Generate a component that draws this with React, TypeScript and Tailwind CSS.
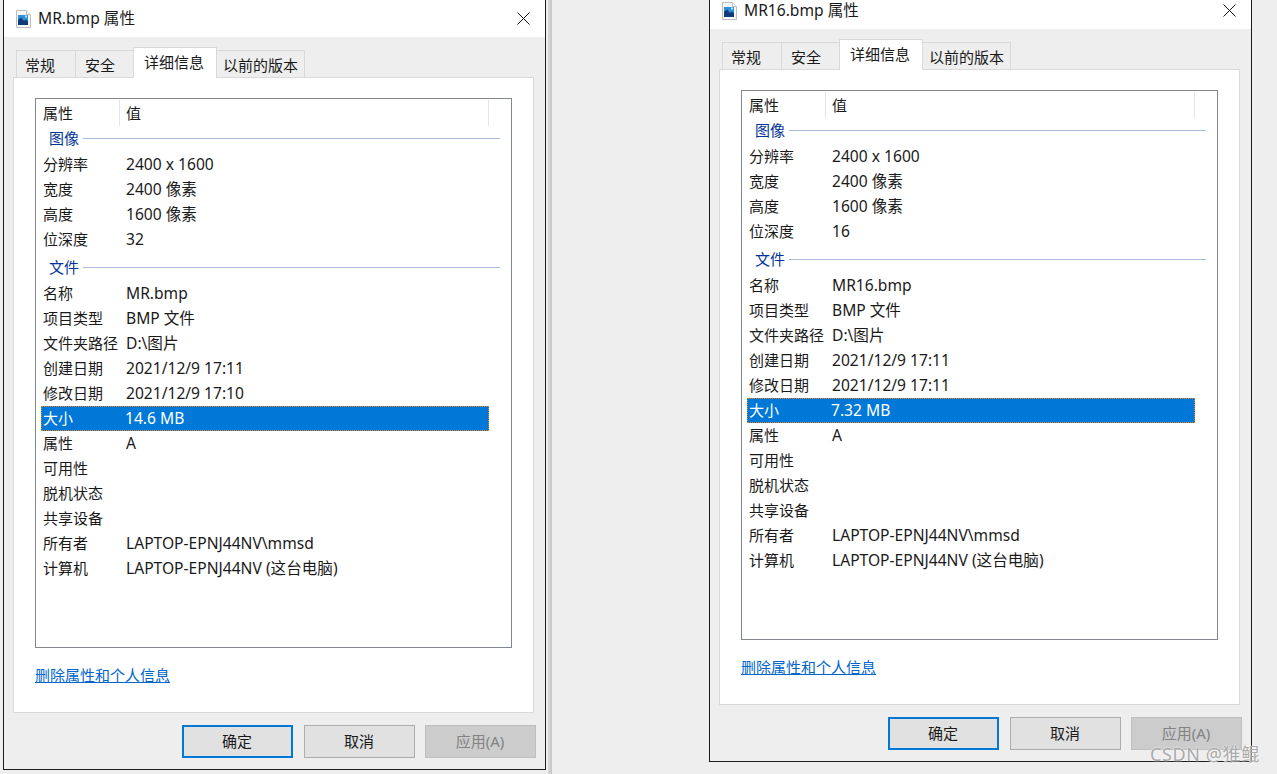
import React from 'react';

type Row = { label: string; value?: string; selected?: boolean };

const FileIcon = () => (
  <svg width="15" height="18" viewBox="0 0 15 18" className="mr-[7px] shrink-0">
    <path d="M0.5 0.5H10.5L14.5 4.5V17.5H0.5Z" fill="#f7f7f7" stroke="#b9bec4" />
    <path d="M10.5 0.5V4.5H14.5" fill="#ffffff" stroke="#b9bec4" />
    <rect x="2" y="5" width="10" height="10" fill="#2f8fd8" />
    <path d="M2 15V10L5 7.5L8 11L10 9.5L12 11.5V15Z" fill="#123a7a" />
    <rect x="9" y="5.5" width="2" height="2" fill="#bfe6fb" />
  </svg>
);

const Tab = ({ label, className, active }: { label: string; className: string; active?: boolean }) => (
  <div
    className={
      'flex items-center border border-b-0 border-[#d9d9d9] ' +
      (active
        ? 'relative z-10 -mb-px h-[31px] bg-white pb-[2px] '
        : 'mt-[3px] h-[27px] bg-[#eeeeee] pt-[3px] ') +
      className
    }
  >
    {label}
  </div>
);

const Group = ({ label, className }: { label: string; className: string }) => (
  <div className={`flex items-center pl-[13px] pr-[11px] ${className}`}>
    <span className="text-[#003399]">{label}</span>
    <div className="ml-[4px] h-px flex-1 bg-[#a9bbdc]" />
  </div>
);

const PropRow = ({ label, value, selected }: Row) => (
  <div
    className={
      'ml-[5px] flex h-[25px] w-[448px] items-center pl-[2px] ' +
      (selected ? 'border border-dotted border-[#e8801a] bg-[#0078d7] text-white' : '')
    }
  >
    <span className={selected ? 'w-[82px] -ml-px' : 'w-[83px]'}>{label}</span>
    <span className="text-[15.6px]">{value}</span>
  </div>
);

const Button = ({ label, variant }: { label: string; variant?: 'primary' | 'disabled' }) => (
  <button
    className={
      'h-[33px] w-[111px] pr-px ' +
      (variant === 'primary'
        ? 'mr-px border-2 border-[#0078d7] bg-[#e1e1e1]'
        : variant === 'disabled'
          ? 'border border-[#bfbfbf] bg-[#cccccc] text-[#838383]'
          : 'border border-[#adadad] bg-[#e1e1e1]')
    }
  >
    {label}
  </button>
);

const PropertiesWindow = ({
  title,
  depth,
  fileName,
  modified,
  size,
  className,
}: {
  title: string;
  depth: string;
  fileName: string;
  modified: string;
  size: string;
  className: string;
}) => {
  const imageRows: Row[] = [
    { label: '分辨率', value: '2400 x 1600' },
    { label: '宽度', value: '2400 像素' },
    { label: '高度', value: '1600 像素' },
    { label: '位深度', value: depth },
  ];
  const fileRows: Row[] = [
    { label: '名称', value: fileName },
    { label: '项目类型', value: 'BMP 文件' },
    { label: '文件夹路径', value: 'D:\\图片' },
    { label: '创建日期', value: '2021/12/9 17:11' },
    { label: '修改日期', value: modified },
    { label: '大小', value: size, selected: true },
    { label: '属性', value: 'A' },
    { label: '可用性' },
    { label: '脱机状态' },
    { label: '共享设备' },
    { label: '所有者', value: 'LAPTOP-EPNJ44NV\\mmsd' },
    { label: '计算机', value: 'LAPTOP-EPNJ44NV (这台电脑)' },
  ];

  return (
    <div className={`h-[770px] w-[543px] shrink-0 border-x border-b border-[#1c1c1c] bg-[#eeeeee] ${className}`}>
      {/* Title bar */}
      <div className="flex h-[37px] items-center bg-white pl-[12px] pr-[15px]">
        <FileIcon />
        <span className="flex-1 text-[15.6px] text-[#1a1a1a]">{title}</span>
        <svg width="13" height="13" viewBox="0 0 13 13" className="mb-px">
          <path d="M0.5 0.5L12.5 12.5M12.5 0.5L0.5 12.5" stroke="#111111" strokeWidth="1" />
        </svg>
      </div>

      <div className="pl-[9px] pr-[9px]">
        {/* Tabs */}
        <div className="flex pl-[3px] pt-[10px]">
          <Tab label="常规" className="w-[60px] pl-[8px]" />
          <Tab label="安全" className="-ml-px w-[59px] pl-[9px]" />
          <Tab label="详细信息" active className="-ml-px w-[84px] pl-[10px]" />
          <Tab label="以前的版本" className="-ml-px w-[89px] pl-[6px]" />
        </div>

        {/* Details panel */}
        <div className="h-[636px] w-[521px] border border-[#d9d9d9] bg-white pl-[21px] pt-[20px]">
          <div className="h-[550px] w-[477px] border border-[#828790] pt-px">
            <div className="flex h-[28px] items-center pb-[2px]">
              <span className="w-[84px] border-r border-[#e5e5e5] pl-[7px] leading-[26px]">属性</span>
              <span className="w-[369px] border-r border-[#e5e5e5] pl-[6px] leading-[26px]">值</span>
            </div>
            <Group label="图像" className="mb-px h-[23px] pb-[2px]" />
            {imageRows.map((r) => (
              <PropRow key={r.label} {...r} />
            ))}
            <Group label="文件" className="mb-[2px] mt-[4px] h-[23px]" />
            {fileRows.map((r) => (
              <PropRow key={r.label} {...r} />
            ))}
          </div>
          <a className="mt-[17px] block w-fit leading-[20px] text-[#0066cc] underline">删除属性和个人信息</a>
        </div>

        {/* Buttons */}
        <div className="mt-[12px] flex justify-end gap-[10px]">
          <Button label="确定" variant="primary" />
          <Button label="取消" />
          <Button label="应用(A)" variant="disabled" />
        </div>
      </div>
    </div>
  );
};

export default function App() {
  return (
    <div
      className="relative flex h-[774px] w-[1277px] overflow-hidden bg-[#eeeeee] text-[15px] text-[#1a1a1a]"
      style={{ fontFamily: '"Noto Sans", "Noto Sans CJK SC", sans-serif' }}
    >
      <PropertiesWindow
        className="ml-[3px]"
        title="MR.bmp 属性"
        depth="32"
        fileName="MR.bmp"
        modified="2021/12/9 17:10"
        size="14.6 MB"
      />
      <div className="ml-[2px] w-[4px] shrink-0 bg-gradient-to-r from-[#d8d8d8] to-[#c6c6c6]" />
      <PropertiesWindow
        className="-mt-2 ml-[157px]"
        title="MR16.bmp 属性"
        depth="16"
        fileName="MR16.bmp"
        modified="2021/12/9 17:11"
        size="7.32 MB"
      />
      {/* CSDN watermark */}
      <div className="absolute left-[1150px] top-[741px] text-[18px] tracking-[0.6px] text-[#aaaaaa] [text-shadow:0_0_2px_#ffffff]">
        CSDN @猚鲲
      </div>
    </div>
  );
}
